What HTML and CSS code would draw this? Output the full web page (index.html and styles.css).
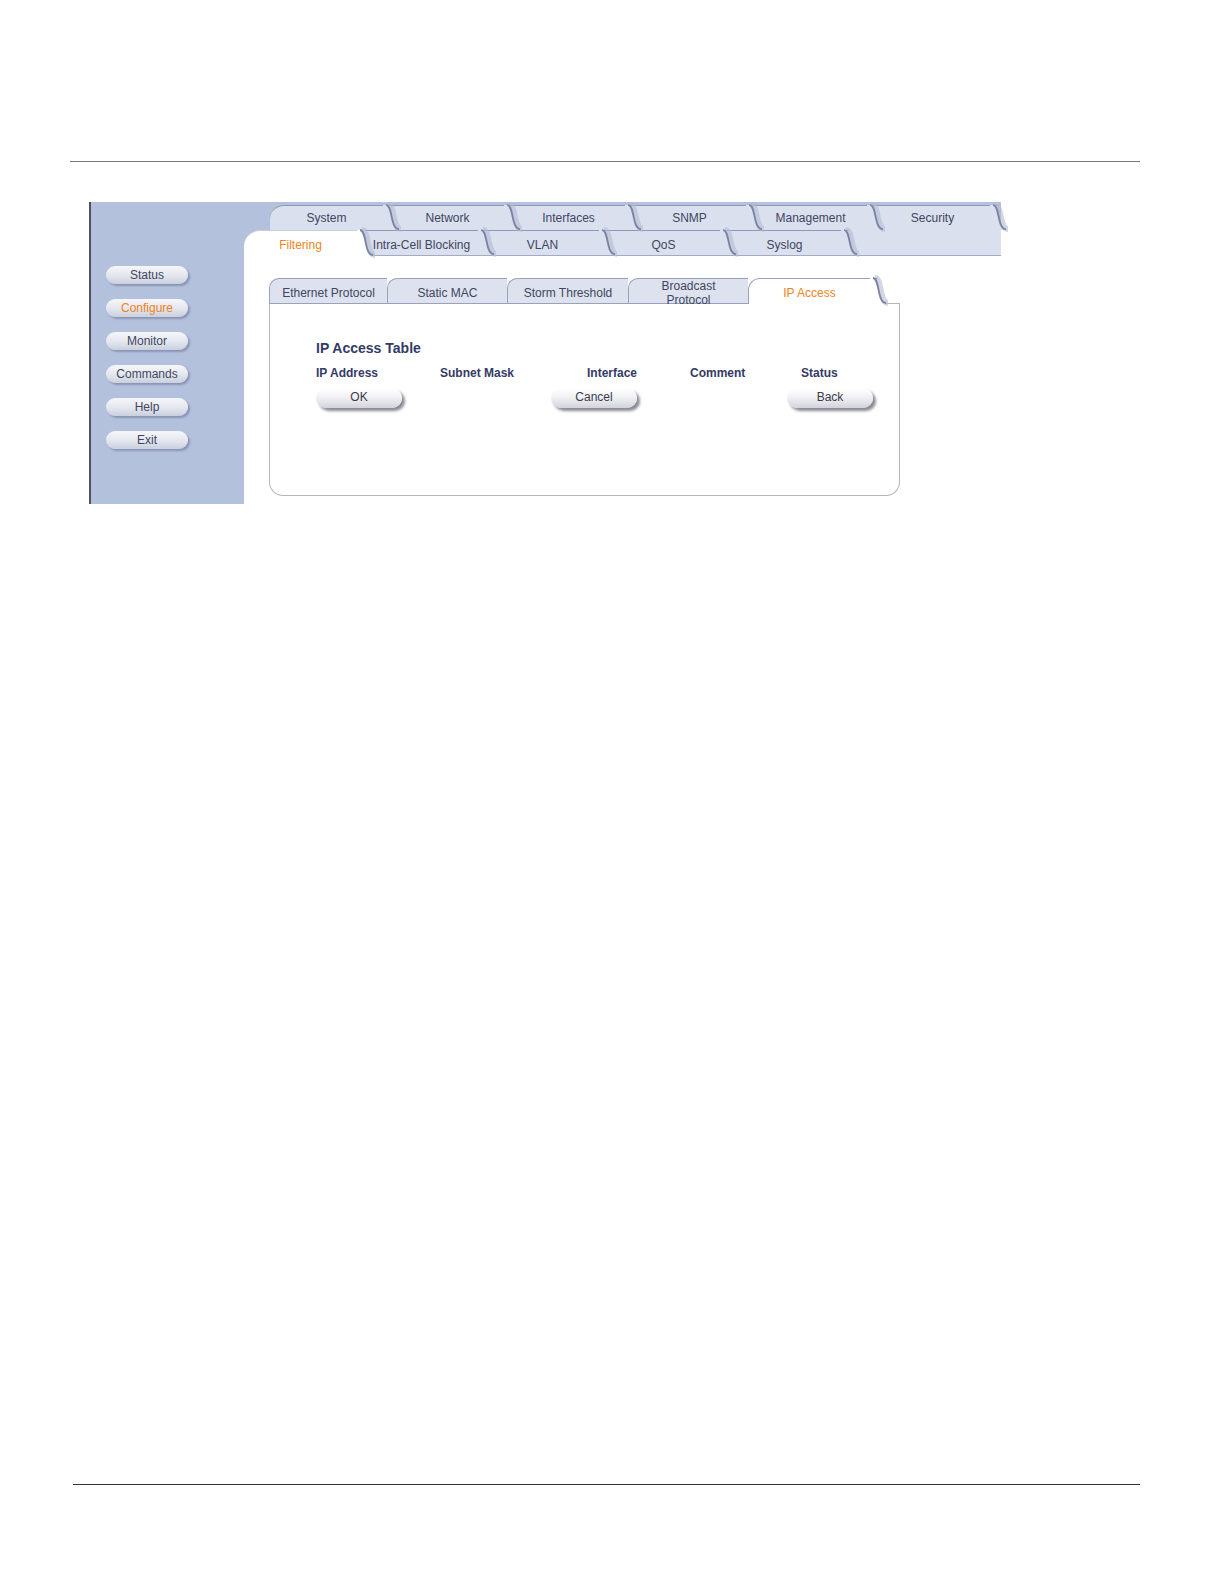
FILE: index.html
```html
<!DOCTYPE html>
<html lang="en">
  <head>
    <meta charset="UTF-8" />
    <title>IP Access</title>
    <link rel="stylesheet" href="styles.css">
  </head>
  <body>
    <div class="page">
      <div class="rule rule-top"></div>

      <div class="shot">
        <nav class="side">
          <div class="side-btn">Status</div>
          <div class="side-btn active">Configure</div>
          <div class="side-btn">Monitor</div>
          <div class="side-btn">Commands</div>
          <div class="side-btn">Help</div>
          <div class="side-btn">Exit</div>
        </nav>

        <div class="main">
          <div class="tabs tabs-top">
            <div class="tab">System<svg class="curve" viewBox="0 0 16 26" preserveAspectRatio="none"><path class="fill" d="M0 0 H3 C10 0 7 25 16 25 V26 H0 Z"/><path class="shade" d="M3 0 C10 0 7 25 16 25"/><path class="edge" d="M3 0 C10 0 7 25 16 25"/></svg></div>
            <div class="tab">Network<svg class="curve" viewBox="0 0 16 26" preserveAspectRatio="none"><path class="fill" d="M0 0 H3 C10 0 7 25 16 25 V26 H0 Z"/><path class="shade" d="M3 0 C10 0 7 25 16 25"/><path class="edge" d="M3 0 C10 0 7 25 16 25"/></svg></div>
            <div class="tab">Interfaces<svg class="curve" viewBox="0 0 16 26" preserveAspectRatio="none"><path class="fill" d="M0 0 H3 C10 0 7 25 16 25 V26 H0 Z"/><path class="shade" d="M3 0 C10 0 7 25 16 25"/><path class="edge" d="M3 0 C10 0 7 25 16 25"/></svg></div>
            <div class="tab">SNMP<svg class="curve" viewBox="0 0 16 26" preserveAspectRatio="none"><path class="fill" d="M0 0 H3 C10 0 7 25 16 25 V26 H0 Z"/><path class="shade" d="M3 0 C10 0 7 25 16 25"/><path class="edge" d="M3 0 C10 0 7 25 16 25"/></svg></div>
            <div class="tab">Management<svg class="curve" viewBox="0 0 16 26" preserveAspectRatio="none"><path class="fill" d="M0 0 H3 C10 0 7 25 16 25 V26 H0 Z"/><path class="shade" d="M3 0 C10 0 7 25 16 25"/><path class="edge" d="M3 0 C10 0 7 25 16 25"/></svg></div>
            <div class="tab tab-last">Security<svg class="curve" viewBox="0 0 16 26" preserveAspectRatio="none"><path class="fill" d="M0 0 H3 C10 0 7 25 16 25 V26 H0 Z"/><path class="shade" d="M3 0 C10 0 7 25 16 25"/><path class="edge" d="M3 0 C10 0 7 25 16 25"/></svg></div>
          </div>

          <div class="tabs tabs-second">
            <div class="tab active">Filtering<svg class="curve" viewBox="0 0 16 26" preserveAspectRatio="none"><path class="fill" d="M0 0 H3 C10 0 7 25 16 25 V26 H0 Z"/><path class="shade" d="M3 0 C10 0 7 25 16 25"/><path class="edge" d="M3 0 C10 0 7 25 16 25"/></svg></div>
            <div class="tab">Intra-Cell Blocking<svg class="curve" viewBox="0 0 16 26" preserveAspectRatio="none"><path class="fill" d="M0 0 H3 C10 0 7 25 16 25 V26 H0 Z"/><path class="shade" d="M3 0 C10 0 7 25 16 25"/><path class="edge" d="M3 0 C10 0 7 25 16 25"/></svg></div>
            <div class="tab">VLAN<svg class="curve" viewBox="0 0 16 26" preserveAspectRatio="none"><path class="fill" d="M0 0 H3 C10 0 7 25 16 25 V26 H0 Z"/><path class="shade" d="M3 0 C10 0 7 25 16 25"/><path class="edge" d="M3 0 C10 0 7 25 16 25"/></svg></div>
            <div class="tab">QoS<svg class="curve" viewBox="0 0 16 26" preserveAspectRatio="none"><path class="fill" d="M0 0 H3 C10 0 7 25 16 25 V26 H0 Z"/><path class="shade" d="M3 0 C10 0 7 25 16 25"/><path class="edge" d="M3 0 C10 0 7 25 16 25"/></svg></div>
            <div class="tab">Syslog<svg class="curve" viewBox="0 0 16 26" preserveAspectRatio="none"><path class="fill" d="M0 0 H3 C10 0 7 25 16 25 V26 H0 Z"/><path class="shade" d="M3 0 C10 0 7 25 16 25"/><path class="edge" d="M3 0 C10 0 7 25 16 25"/></svg></div>
            <div class="tab-rest"></div>
          </div>

          <div class="content">
            <div class="subtabs">
              <div class="subtab">Ethernet Protocol</div>
              <div class="subtab">Static MAC</div>
              <div class="subtab">Storm Threshold</div>
              <div class="subtab two-line">Broadcast<br />Protocol</div>
              <div class="subtab active">IP Access<svg class="curve" viewBox="0 0 16 26" preserveAspectRatio="none"><path class="fill" d="M0 0 H3 C10 0 7 25 16 25 V26 H0 Z"/><path class="shade" d="M3 0 C10 0 7 25 16 25"/><path class="edge" d="M3 0 C10 0 7 25 16 25"/></svg></div>
              <div class="subtab-fill"></div>
            </div>

            <div class="panel">
              <h3>IP Access Table</h3>
              <div class="cols">
                <span>IP Address</span>
                <span>Subnet Mask</span>
                <span>Interface</span>
                <span>Comment</span>
                <span>Status</span>
              </div>
              <div class="actions">
                <div class="btn">OK</div>
                <div class="btn">Cancel</div>
                <div class="btn">Back</div>
              </div>
            </div>
          </div>
        </div>
      </div>

      <div class="rule rule-bottom"></div>
    </div>
  </body>
</html>
```

FILE: styles.css
```css
body {
  margin: 0;
  font-family: "Liberation Sans", Arial, sans-serif;
  background: white;
}
.page {
  padding-top: 161px;
}
.rule {
  height: 1px;
  background-color: #7a7a7a;
}
.rule-top {
  margin-left: 70px;
  width: 1070px;
}
.rule-bottom {
  margin-top: 980px;
  margin-left: 73px;
  width: 1067px;
  background-color: #333;
}

/* screenshot frame */
.shot {
  margin-top: 40px;
  margin-left: 89px;
  width: 912px;
  height: 302px;
  display: flex;
}
.side {
  width: 153px;
  border-left: 2px solid #50535e;
  background-color: #b3c1dd;
  padding-top: 64px;
  display: flex;
  flex-direction: column;
  gap: 15px;
}
.side-btn {
  margin-left: 15px;
  width: 82px;
  height: 18px;
  line-height: 19px;
  text-align: center;
  font-size: 12px;
  color: #41465f;
  border-radius: 9px;
  background: linear-gradient(to bottom, #f6f7fa, #e3e6ee 55%, #c9cfdd);
  box-shadow: 2px 2px 2px #8b95b3;
}
.side-btn.active {
  color: #ef8420;
}

.main {
  width: 757px;
  display: flex;
  flex-direction: column;
  background-color: white;
}

/* main tab rows */
.tabs {
  display: flex;
  align-items: flex-end;
  background-color: #b3c1dd;
}
.tabs-top {
  height: 28px;
  padding-left: 26px;
}
.tabs-second {
  height: 26px;
}
.tab {
  position: relative;
  height: 25px;
  line-height: 25px;
  text-align: center;
  font-size: 12px;
  color: #41465f;
  background-color: #dae0ee;
  border-top: 1px solid #8f98b6;
  box-sizing: border-box;
  width: 121px;
  padding-right: 8px;
}
.tabs-top .tab:first-child {
  border-top-left-radius: 14px;
}
.tabs-top .tab-last {
  width: 123px;
}
.tabs-second .tab {
  height: 26px;
  line-height: 29px;
  border-bottom: 1px solid #a3abc4;
}
.tabs-second .tab.active {
  background-color: white;
  color: #ef8420;
  border-top-left-radius: 16px;
  border-top-color: #c9cfdf;
  border-bottom: none;
}
.tab-rest {
  flex: 1;
  height: 26px;
  box-sizing: border-box;
  background-color: #dae0ee;
  border-bottom: 1px solid #a3abc4;
}
.curve {
  position: absolute;
  top: -1px;
  right: -8px;
  width: 16px;
  height: calc(100% + 1px);
  z-index: 2;
  overflow: visible;
}
.curve .fill {
  fill: #dae0ee;
}
.active .curve .fill {
  fill: white;
}
.curve .shade {
  fill: none;
  stroke: #b4bbd2;
  stroke-width: 6;
  opacity: 0.6;
  transform: translate(2px, 0);
}
.curve .edge {
  fill: none;
  stroke: #7a83a2;
  stroke-width: 1.8;
}

/* sub tabs */
.content {
  padding: 22px 0 0 25px;
}
.subtabs {
  display: flex;
  width: 631px;
  height: 26px;
}
.subtab {
  position: relative;
  height: 26px;
  box-sizing: border-box;
  font-size: 12px;
  color: #41465f;
  text-align: center;
  line-height: 28px;
  background-color: #dde2ee;
  border-top: 1px solid #9aa1ba;
  border-left: 1px solid #9aa1ba;
  border-bottom: 1px solid #9aa1ba;
  border-top-left-radius: 10px;
}
.subtab:nth-child(1) { width: 118px; }
.subtab:nth-child(2) { width: 120px; }
.subtab:nth-child(3) { width: 121px; }
.subtab:nth-child(4) { width: 120px; }
.subtab.two-line {
  line-height: 14px;
}
.subtab.active {
  width: 130px;
  background-color: white;
  color: #ef8420;
  border-bottom: none;
  border-top-left-radius: 12px;
  padding-right: 8px;
}
.subtab-fill {
  flex: 1;
  height: 26px;
  box-sizing: border-box;
  border-bottom: 1px solid #b3b5bf;
}

/* panel */
.panel {
  width: 631px;
  height: 192px;
  box-sizing: border-box;
  border: 1px solid #b3b5bf;
  border-top: none;
  border-radius: 0 0 14px 14px;
  padding: 36px 0 0 46px;
  color: #343a66;
}
.panel h3 {
  margin: 0;
  font-size: 14px;
  line-height: 16px;
  font-weight: bold;
}
.cols {
  display: grid;
  grid-template-columns: 124px 147px 103px 111px auto;
  margin-top: 10px;
  font-size: 12px;
  font-weight: bold;
  line-height: 14px;
}
.actions {
  display: grid;
  grid-template-columns: 235px 236px auto;
  margin-top: 8px;
}
.btn {
  width: 86px;
  height: 20px;
  line-height: 19px;
  text-align: center;
  font-size: 12px;
  color: #3a3a4a;
  border-radius: 10px;
  background: linear-gradient(to bottom, #ffffff, #f2f2f5 45%, #d2d3db);
  box-shadow: 3px 3px 3px #8a8a94;
}
```
